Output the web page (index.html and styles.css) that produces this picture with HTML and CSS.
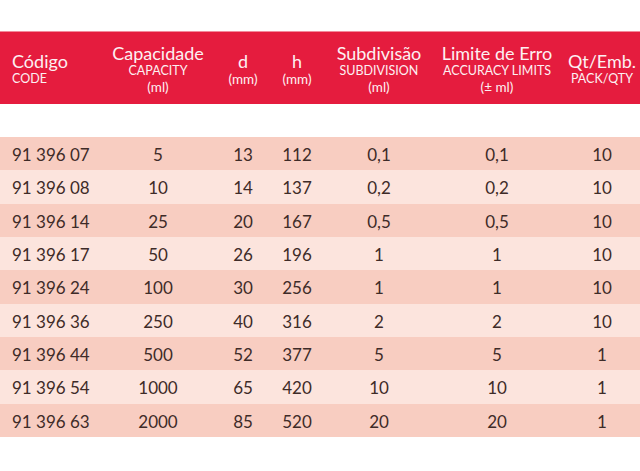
FILE: index.html
```html
<!DOCTYPE html>
<html lang="pt">
<head>
<meta charset="utf-8">
<title>Tabela</title>
<link rel="stylesheet" href="styles.css">
</head>
<body>
<div class="table">
  <div class="row head">
    <div class="cell code"><span class="t">Código</span><span class="s">CODE</span></div>
    <div class="cell"><span class="t">Capacidade</span><span class="s">CAPACITY</span><span class="s u">(ml)</span></div>
    <div class="cell"><span class="t">d</span><span class="s u">(mm)</span></div>
    <div class="cell"><span class="t">h</span><span class="s u">(mm)</span></div>
    <div class="cell"><span class="t">Subdivisão</span><span class="s">SUBDIVISION</span><span class="s u">(ml)</span></div>
    <div class="cell"><span class="t">Limite de Erro</span><span class="s">ACCURACY LIMITS</span><span class="s u">(± ml)</span></div>
    <div class="cell last"><span class="t">Qt/Emb.</span><span class="s">PACK/QTY</span></div>
  </div>
  <div class="body">
    <div class="row data"><div class="cell code">91 396 07</div><div class="cell">5</div><div class="cell">13</div><div class="cell">112</div><div class="cell">0,1</div><div class="cell">0,1</div><div class="cell last">10</div></div>
    <div class="row data"><div class="cell code">91 396 08</div><div class="cell">10</div><div class="cell">14</div><div class="cell">137</div><div class="cell">0,2</div><div class="cell">0,2</div><div class="cell last">10</div></div>
    <div class="row data"><div class="cell code">91 396 14</div><div class="cell">25</div><div class="cell">20</div><div class="cell">167</div><div class="cell">0,5</div><div class="cell">0,5</div><div class="cell last">10</div></div>
    <div class="row data"><div class="cell code">91 396 17</div><div class="cell">50</div><div class="cell">26</div><div class="cell">196</div><div class="cell">1</div><div class="cell">1</div><div class="cell last">10</div></div>
    <div class="row data"><div class="cell code">91 396 24</div><div class="cell">100</div><div class="cell">30</div><div class="cell">256</div><div class="cell">1</div><div class="cell">1</div><div class="cell last">10</div></div>
    <div class="row data"><div class="cell code">91 396 36</div><div class="cell">250</div><div class="cell">40</div><div class="cell">316</div><div class="cell">2</div><div class="cell">2</div><div class="cell last">10</div></div>
    <div class="row data"><div class="cell code">91 396 44</div><div class="cell">500</div><div class="cell">52</div><div class="cell">377</div><div class="cell">5</div><div class="cell">5</div><div class="cell last">1</div></div>
    <div class="row data"><div class="cell code">91 396 54</div><div class="cell">1000</div><div class="cell">65</div><div class="cell">420</div><div class="cell">10</div><div class="cell">10</div><div class="cell last">1</div></div>
    <div class="row data"><div class="cell code">91 396 63</div><div class="cell">2000</div><div class="cell">85</div><div class="cell">520</div><div class="cell">20</div><div class="cell">20</div><div class="cell last">1</div></div>
  </div>
</div>
</body>
</html>
```
FILE: styles.css
```css
html, body {
  margin: 0;
  padding: 0;
  background: #ffffff;
}
body {
  font-family: Lato, "Open Sans", "Liberation Sans", sans-serif;
  width: 640px;
  height: 471px;
  overflow: hidden;
}
.table {
  padding-top: 31px;
}
.row {
  display: grid;
  grid-template-columns: 110px 96px 74px 34px 130px 106px 90px;
}
.cell {
  display: flex;
  justify-content: center;
  align-items: center;
  white-space: nowrap;
}
.cell.code {
  justify-content: flex-start;
  padding-left: 12px;
}
.cell.last {
  padding-left: 14px;
}
.head {
  height: 72px;
  background: #e51c3e;
  border-top: 1px solid #f28a9b;
  color: #fdf0f2;
}
.head .cell {
  flex-direction: column;
  padding-top: 2px;
}
.head .cell.code {
  align-items: flex-start;
  justify-content: center;
}
.head .t {
  font-size: 18px;
  line-height: 20px;
}
.head .s {
  font-size: 12.5px;
  line-height: 16px;
}
.head .s.u {
  font-size: 13.5px;
}
.body {
  margin-top: 33px;
}
.data {
  height: 33.33px;
  font-size: 17px;
  color: #3e2b28;
  background: #f8cdc1;
}
.data .cell {
  padding-top: 2px;
}
.data:nth-child(even) {
  background: #fce4dd;
}
```
